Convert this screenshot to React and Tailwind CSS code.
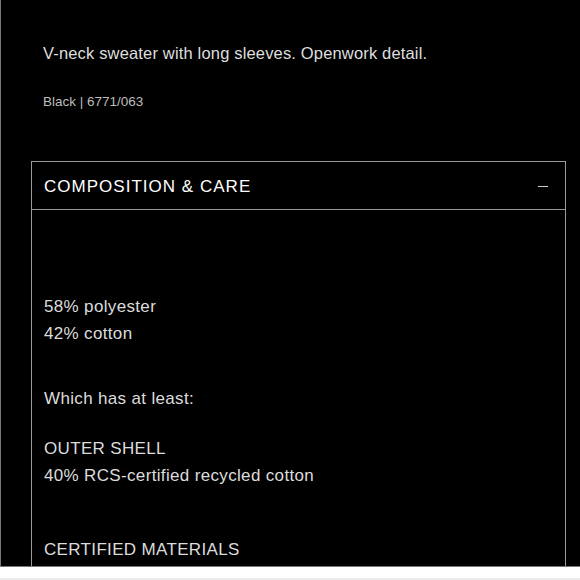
const App = () => {
  return (
    <div className="w-[580px] h-[580px] overflow-hidden bg-[#ececec] font-['Liberation_Sans',Arial,sans-serif]">
      <div className="h-[567px] bg-black border-l border-b border-[#777] overflow-hidden">
        <p className="pt-[42px] pl-[42px] text-[16.5px] leading-[22px] text-[#dedede] tracking-[0.01em]">
          V-neck sweater with long sleeves. Openwork detail.
        </p>
        <p className="mt-[29px] pl-[42px] text-[13.5px] leading-[18px] text-[#bdbdbd]">Black | 6771/063</p>

        <div className="ml-[30px] mt-[50px] w-[535px] border border-[#9a9a9a]">
          <div className="h-[48px] pt-[2px] flex items-center justify-between pl-[12px] pr-[17px] border-b border-[#9a9a9a]">
            <h3 className="text-[17px] text-white tracking-[0.06em] font-medium">COMPOSITION &amp; CARE</h3>
            <span className="block w-[10px] h-px bg-[#cfcfcf]" />
          </div>
          <div className="pl-[12px] pt-[83px] pb-[40px] text-[17px] leading-[27px] text-[#dcdcdc] tracking-[0.02em]">
            <p>58% polyester</p>
            <p>42% cotton</p>
            <p className="mt-[38px]">Which has at least:</p>
            <p className="mt-[23px]">OUTER SHELL</p>
            <p>40% RCS-certified recycled cotton</p>
            <p className="mt-[47px]">CERTIFIED MATERIALS</p>
          </div>
        </div>
      </div>
      <div className="h-[11px] bg-white" />
    </div>
  );
};

export default App;
